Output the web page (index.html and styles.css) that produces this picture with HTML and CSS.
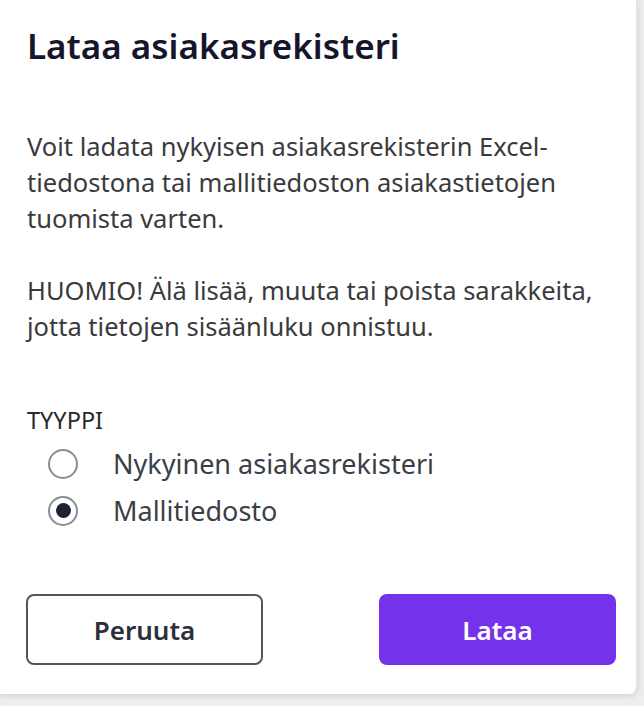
FILE: index.html
```html
<!DOCTYPE html>
<html lang="fi">
<head>
    <meta charset="UTF-8">
    <meta name="viewport" content="width=device-width, initial-scale=1.0">
    <title>Lataa asiakasrekisteri</title>
    <link rel="stylesheet" href="styles.css">
</head>
<body>

    <!-- Download dialog -->
    <div class="dialog">
        <h2 class="dialog-title">Lataa asiakasrekisteri</h2>

        <div class="dialog-body">
            <p>Voit ladata nykyisen asiakasrekisterin Excel-<br>tiedostona tai mallitiedoston asiakastietojen<br>tuomista varten.</p>
            <p>HUOMIO! Älä lisää, muuta tai poista sarakkeita,<br>jotta tietojen sisäänluku onnistuu.</p>
        </div>

        <fieldset class="type-group">
            <legend>TYYPPI</legend>
            <label class="radio">
                <input type="radio" name="type" value="current">
                <span class="radio-mark"></span>
                <span>Nykyinen asiakasrekisteri</span>
            </label>
            <label class="radio">
                <input type="radio" name="type" value="template" checked>
                <span class="radio-mark"></span>
                <span>Mallitiedosto</span>
            </label>
        </fieldset>

        <div class="dialog-actions">
            <button class="btn btn-secondary">Peruuta</button>
            <button class="btn btn-primary">Lataa</button>
        </div>
    </div>

</body>
</html>
```

FILE: styles.css
```css
/* Page */
body {
    margin: 0;
    height: 706px;
    background: #eeeeef;
    font-family: 'Noto Sans', sans-serif;
}

/* Dialog Card */
.dialog {
    width: 638px;
    height: 694px;
    box-sizing: border-box;
    padding: 0 20px 0 27px;
    background: #fff;
    border-right: 2px solid #e3e3e6;
    border-radius: 0 0 8px 0;
    box-shadow: 0 2px 6px rgba(0, 0, 0, 0.12);
    display: flex;
    flex-direction: column;
}

.dialog-title {
    margin: 24px 0 0;
    font-size: 35px;
    font-weight: 600;
    line-height: 44px;
    color: #15152b;
}

/* Text */
.dialog-body {
    margin-top: 60px;
    color: #3a3a3c;
    font-size: 25.5px;
    line-height: 36px;
}

.dialog-body p {
    margin: 0 0 36px;
    white-space: nowrap;
}

/* Radio Group */
.type-group {
    margin: 22px 0 0;
    padding: 0;
    border: none;
}

.type-group legend {
    padding: 0;
    font-size: 23.5px;
    line-height: 36px;
    color: #2a2a2c;
}

.radio {
    display: flex;
    align-items: center;
    gap: 35px;
    margin-left: 21px;
    height: 47px;
    font-size: 27px;
    color: #3a3f48;
}

.radio:first-of-type {
    margin-top: 2px;
}

.radio input {
    display: none;
}

.radio-mark {
    width: 30px;
    height: 30px;
    box-sizing: border-box;
    border: 2px solid #8a8c94;
    border-radius: 50%;
    display: flex;
    align-items: center;
    justify-content: center;
}

.radio input:checked + .radio-mark::after {
    content: "";
    width: 15px;
    height: 15px;
    border-radius: 50%;
    background: #1b2333;
}

/* Buttons */
.dialog-actions {
    margin-top: auto;
    margin-bottom: 29px;
    display: flex;
    justify-content: space-between;
}

.btn {
    width: 237px;
    height: 71px;
    border-radius: 8px;
    font-family: 'Noto Sans', sans-serif;
    font-size: 26px;
    font-weight: 600;
    cursor: pointer;
}

.btn-secondary {
    margin-left: -1px;
    background: #fff;
    border: 2px solid #4f5663;
    color: #2b303a;
}

.btn-primary {
    background: #7433ea;
    border: none;
    color: #fff;
}
```
